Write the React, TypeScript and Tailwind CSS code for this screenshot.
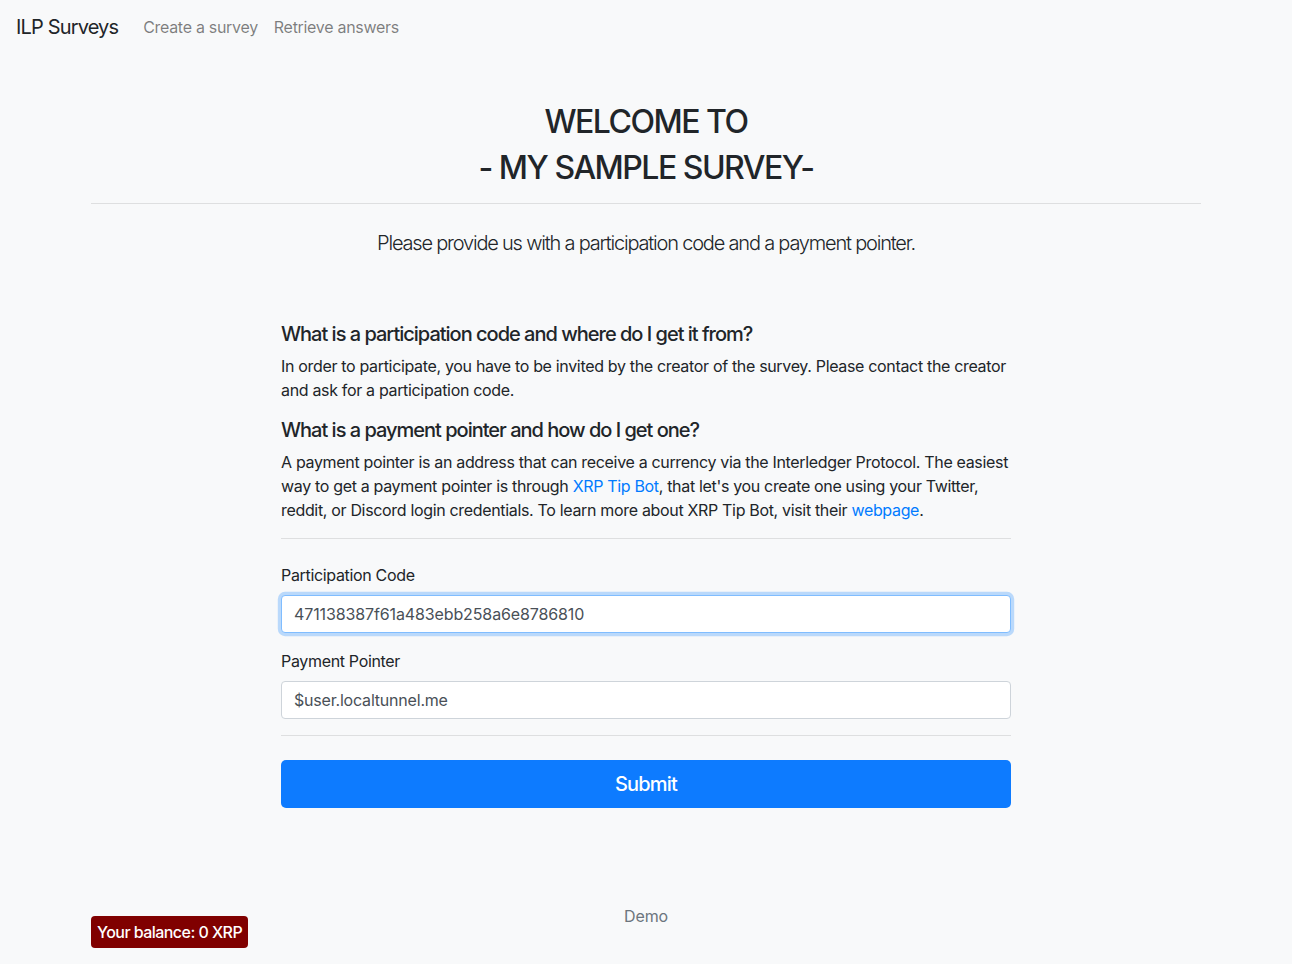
export default function App() {
  const font = { fontFamily: 'Inter, "Noto Sans", sans-serif' };
  return (
    <div className="min-h-[964px] bg-[#f8f9fa] text-[#212529] tracking-[-0.33px]" style={font}>
      <nav className="h-[54px] flex items-center px-4">
        <span className="text-[20px] leading-[30px] text-[#212529] mr-[25px] tracking-[-0.85px]">ILP Surveys</span>
        <span className="text-[16px] text-[rgba(0,0,0,0.5)] mr-[16px] tracking-[-0.3px]">Create a survey</span>
        <span className="text-[16px] text-[rgba(0,0,0,0.5)] tracking-[-0.3px]">Retrieve answers</span>
      </nav>
      <main className="w-[1110px] mx-auto pt-[45px]">
        <h1 className="text-center text-[32px] leading-[46px] font-medium tracking-[-1.5px]">
          WELCOME TO
          <br />- MY SAMPLE SURVEY-
        </h1>
        <hr className="mt-[12px] border-0 border-t border-[rgba(0,0,0,0.1)]" />
        <p className="mt-[24px] text-center text-[20px] leading-[30px] font-light tracking-[-1.2px]">
          Please provide us with a participation code and a payment pointer.
        </p>
        <div className="w-[730px] mx-auto mt-[64px]">
          <h5 className="text-[20px] leading-[24px] font-medium tracking-[-1px]">
            What is a participation code and where do I get it from?
          </h5>
          <p className="mt-[8px] text-[16px] leading-[24px]">
            In order to participate, you have to be invited by the creator of the survey. Please contact the creator and ask for a participation code.
          </p>
          <h5 className="mt-[16px] text-[20px] leading-[24px] font-medium tracking-[-1px]">
            What is a payment pointer and how do I get one?
          </h5>
          <p className="mt-[8px] text-[16px] leading-[24px]">
            A payment pointer is an address that can receive a currency via the Interledger Protocol. The easiest way to get a payment pointer is through{' '}
            <a className="text-[#007bff]">XRP Tip Bot</a>, that let's you create one using your Twitter, reddit, or Discord login credentials. To learn more about XRP Tip Bot, visit their{' '}
            <a className="text-[#007bff]">webpage</a>.
          </p>
          <hr className="mt-[16px] border-0 border-t border-[rgba(0,0,0,0.1)]" />
          <label className="block mt-[24px] text-[16px] leading-[24px]">Participation Code</label>
          <input
            readOnly
            value="471138387f61a483ebb258a6e8786810"
            className="mt-[8px] block w-full h-[38px] px-[12px] text-[16px] text-[#495057] bg-white border border-[#80bdff] rounded-[4px] outline-none shadow-[0_0_0_3.2px_rgba(0,123,255,0.25)] tracking-[-0.12px]"
            style={font}
          />
          <label className="block mt-[16px] text-[16px] leading-[24px]">Payment Pointer</label>
          <input
            readOnly
            value="$user.localtunnel.me"
            className="mt-[8px] block w-full h-[38px] px-[12px] text-[16px] text-[#495057] bg-white border border-[#ced4da] rounded-[4px] outline-none tracking-[-0.2px]"
            style={font}
          />
          <hr className="mt-[16px] border-0 border-t border-[rgba(0,0,0,0.1)]" />
          <button
            className="mt-[24px] w-full h-[48px] bg-[#0d7bff] text-white text-[20px] font-medium rounded-[5px] tracking-[-0.8px]"
            style={font}
          >
            Submit
          </button>
        </div>
        <p className="mt-[96px] text-center text-[16px] leading-[24px] text-[#6c757d] pb-[36px] tracking-[-0.1px]">Demo</p>
      </main>
      <div className="fixed left-[91px] bottom-[16px] h-[32px] px-[6px] flex items-center bg-[#800000] text-white text-[16px] rounded-[4px] font-medium tracking-[-0.55px]">
        Your balance: 0 XRP
      </div>
    </div>
  );
}
